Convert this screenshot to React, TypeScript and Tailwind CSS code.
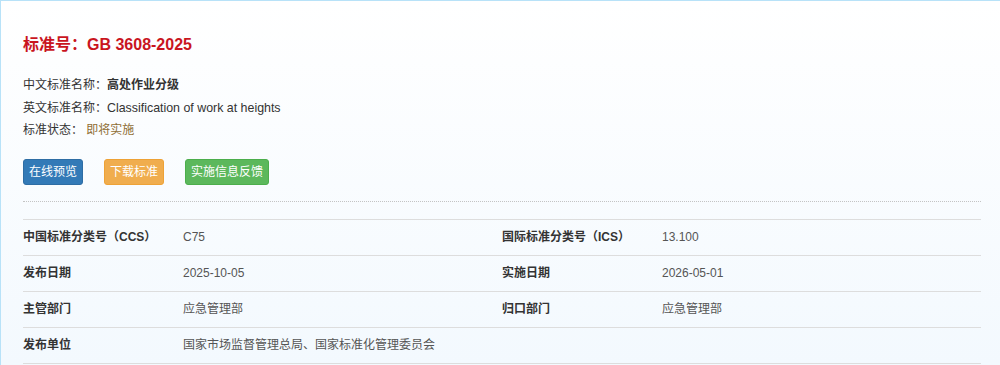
const rows: [string, string, string, string][] = [
  ["中国标准分类号（CCS）", "C75", "国际标准分类号（ICS）", "13.100"],
  ["发布日期", "2025-10-05", "实施日期", "2026-05-01"],
  ["主管部门", "应急管理部", "归口部门", "应急管理部"],
  ["发布单位", "国家市场监督管理总局、国家标准化管理委员会", "", ""],
];

function Btn({ label, tone }: { label: string; tone: string }) {
  return (
    <button
      className={`h-[26px] rounded-[3px] border px-[5px] text-[12px] leading-none text-white ${tone}`}
    >
      {label}
    </button>
  );
}

export default function App() {
  return (
    <div className="h-[365px] w-[1000px] overflow-hidden border-t border-l border-[#b8e2f8] bg-gradient-to-b from-white to-[#f3f9fe] pr-[19px] pl-[22px] font-['Liberation_Sans','Noto_Sans_CJK_SC',sans-serif] text-[12px] text-[#333]">
      <h1 className="mt-[32px] text-[16px] leading-[24px] font-bold text-[#c9151e]">
        标准号：GB 3608-2025
      </h1>

      <div className="mt-[17px] leading-[22.5px]">
        <p>
          中文标准名称：<span className="font-bold">高处作业分级</span>
        </p>
        <p>
          英文标准名称：<span className="text-[12.4px]">Classification of work at heights</span>
        </p>
        <p>
          标准状态：&nbsp;<span className="text-[#8f6e34]">即将实施</span>
        </p>
      </div>

      <div className="mt-[17px] flex gap-[21px]">
        <Btn label="在线预览" tone="border-[#2e6da4] bg-[#337ab7]" />
        <Btn label="下载标准" tone="border-[#eea236] bg-[#f0ad4e]" />
        <Btn label="实施信息反馈" tone="border-[#4cae4c] bg-[#5cb85c]" />
      </div>

      <div className="mt-[16px] border-t border-dotted border-[#c4c4c4]" />

      <div className="mt-[17px] border-b border-[#dddddd]">
        {rows.map(([l1, v1, l2, v2]) => (
          <div key={l1} className="grid h-[36px] grid-cols-[160px_319px_160px_1fr] items-center border-t border-[#dddddd]">
            <span className="font-bold">{l1}</span>
            <span className="text-[#555]">{v1}</span>
            <span className="font-bold">{l2}</span>
            <span className="text-[#555]">{v2}</span>
          </div>
        ))}
      </div>
    </div>
  );
}
